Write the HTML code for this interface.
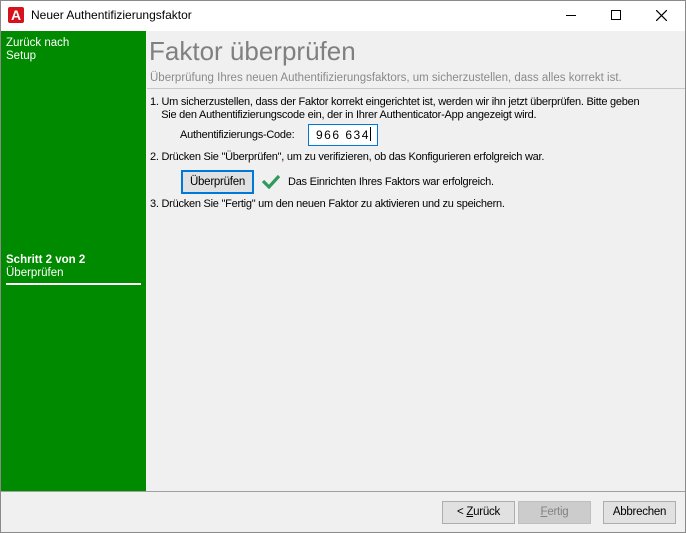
<!DOCTYPE html>
<html><head><style>
*{margin:0;padding:0;box-sizing:border-box}
body{width:686px;height:533px;overflow:hidden;background:#fff;font-family:"Liberation Sans",sans-serif;font-size:11.5px;color:#000;position:relative}
.win{position:absolute;left:0;top:0;width:686px;height:533px;border:1px solid #8a8a8a}
.abs{position:absolute;white-space:nowrap}
.t{font-size:11px;letter-spacing:-0.25px}
.btn{position:absolute;height:23px;border:1px solid #adadad;background:#e1e1e1;text-align:center;line-height:21px;font-size:11.5px}
</style></head><body>
<div class="win"></div>
<div class="abs" style="left:8px;top:7px;width:16px;height:16px;background:#d6121c;border-radius:2px;color:#fff;font-weight:bold;font-size:14px;line-height:16px;text-align:center">A</div>
<div class="abs" style="left:31px;top:8px;font-size:12px">Neuer Authentifizierungsfaktor</div>
<div class="abs" style="left:566px;top:15px;width:10px;height:1px;background:#000"></div>
<div class="abs" style="left:611px;top:10px;width:10px;height:10px;border:1px solid #000"></div>
<svg class="abs" style="left:656px;top:10px" width="11" height="11"><path d="M0 0L11 11M11 0L0 11" stroke="#000" stroke-width="1.2"/></svg>
<div class="abs" style="left:1px;top:31px;width:145px;height:460px;background:#008a00"></div>
<div class="abs" style="left:6px;top:37px;color:#fff;line-height:13px">Zurück nach<br>Setup</div>
<div class="abs" style="left:6px;top:254px;color:#fff;line-height:13px"><b>Schritt 2 von 2</b><br>Überprüfen</div>
<div class="abs" style="left:6px;top:283px;width:135px;height:2px;background:#fff"></div>
<div class="abs" style="left:146px;top:31px;width:539px;height:460px;background:#f0f0f0"></div>
<div class="abs" style="left:149px;top:36px;font-size:26px;color:#808080">Faktor überprüfen</div>
<div class="abs" style="left:150px;top:72px;color:#8a8a8a;font-size:11.5px">Überprüfung Ihres neuen Authentifizierungsfaktors, um sicherzustellen, dass alles korrekt ist.</div>
<div class="abs" style="left:147px;top:88px;width:538px;height:1px;background:#c8c8c8"></div>
<div class="abs t" style="left:150px;top:96px;line-height:13px">1. Um sicherzustellen, dass der Faktor korrekt eingerichtet ist, werden wir ihn jetzt überprüfen. Bitte geben<br>&nbsp;&nbsp;&nbsp;&nbsp;Sie den Authentifizierungscode ein, der in Ihrer Authenticator-App angezeigt wird.</div>
<div class="abs t" style="left:180px;top:129px">Authentifizierungs-Code:</div>
<div class="abs" style="left:308px;top:124px;width:70px;height:22px;border:1px solid #0078d7;background:#fff;padding-left:7px;line-height:20px;letter-spacing:1.5px;font-size:12px">966 634<span style="display:inline-block;width:1px;height:14px;background:#000;vertical-align:-2px"></span></div>
<div class="abs t" style="left:150px;top:151px">2. Drücken Sie "Überprüfen", um zu verifizieren, ob das Konfigurieren erfolgreich war.</div>
<div class="btn t" style="left:181px;top:170px;width:73px;height:24px;border:2px solid #0078d7;line-height:20px">Überprüfen</div>
<svg class="abs" style="left:261px;top:173px" width="20" height="16"><path d="M2 8L8 14L18 3" stroke="#2e9a5c" stroke-width="3.2" fill="none"/></svg>
<div class="abs t" style="left:288px;top:176px">Das Einrichten Ihres Faktors war erfolgreich.</div>
<div class="abs t" style="left:150px;top:198px">3. Drücken Sie "Fertig" um den neuen Faktor zu aktivieren und zu speichern.</div>
<div class="abs" style="left:1px;top:491px;width:684px;height:1px;background:#a0a0a0"></div>
<div class="abs" style="left:1px;top:492px;width:684px;height:40px;background:#f0f0f0"></div>
<div class="btn t" style="left:442px;top:501px;width:73px">&lt; <u>Z</u>urück</div>
<div class="btn t" style="left:518px;top:501px;width:73px;background:#cccccc;border-color:#bfbfbf;color:#838383"><u>F</u>ertig</div>
<div class="btn t" style="left:603px;top:501px;width:73px">Abbrechen</div>
</body></html>
